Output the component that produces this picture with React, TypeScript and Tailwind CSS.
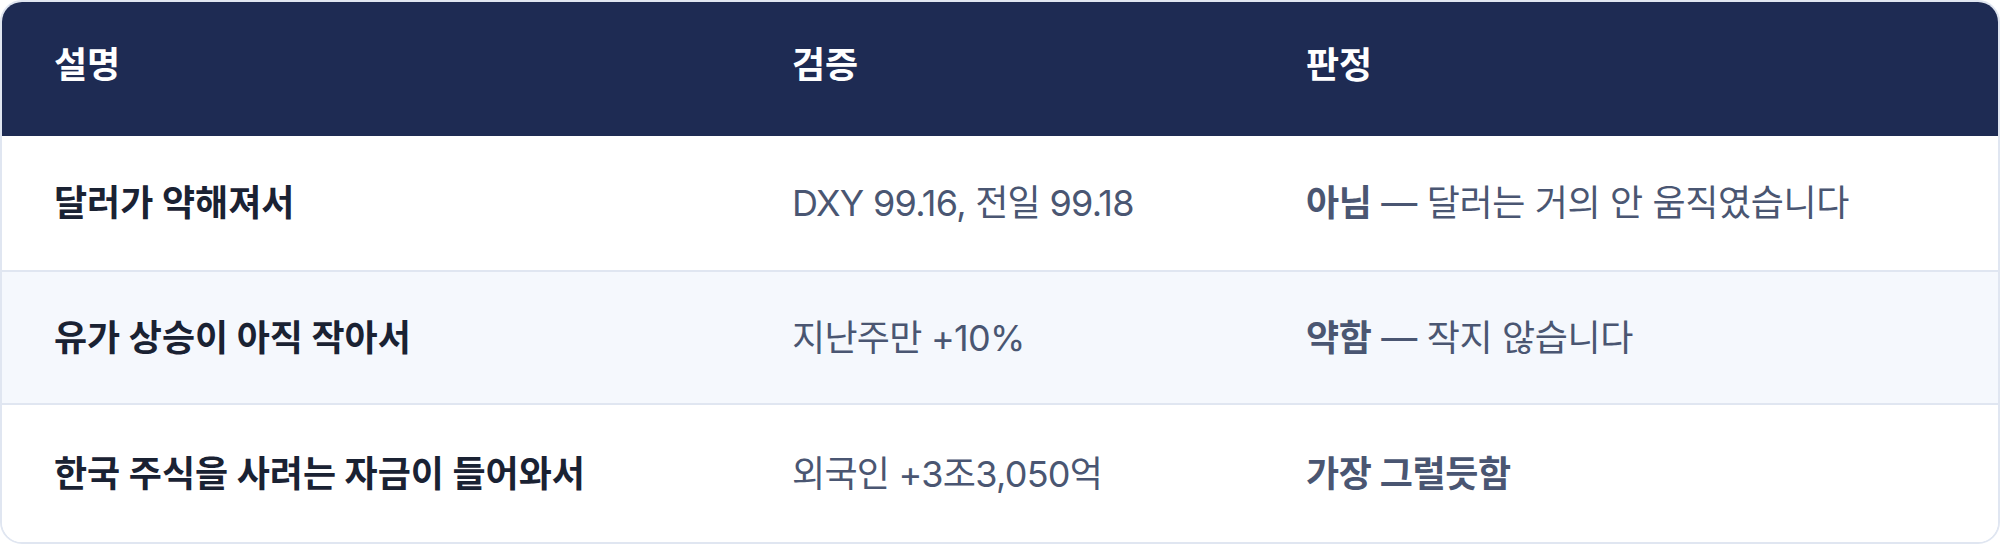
import React from "react";

const rows = [
  { a: "달러가 약해져서", b: "DXY 99.16, 전일 99.18", strong: "아님", rest: " — 달러는 거의 안 움직였습니다", bg: "bg-white", h: "h-[134px]" },
  { a: "유가 상승이 아직 작아서", b: "지난주만 +10%", strong: "약함", rest: " — 작지 않습니다", bg: "bg-[#f5f8fd]", h: "h-[133px]" },
  { a: "한국 주식을 사려는 자금이 들어와서", b: "외국인 +3조3,050억", strong: "가장 그럴듯함", rest: "", bg: "bg-white", h: "flex-1" },
];

export default function App() {
  return (
    <div
      className="w-[2000px] h-[544px] bg-white"
      style={{ fontFamily: 'Inter, "Noto Sans CJK KR", "Noto Sans", sans-serif' }}
    >
      <div className="w-full h-full border-2 border-[#e0e6f1] rounded-[22px] overflow-hidden flex flex-col">
        <div className="h-[134px] bg-[#1e2b53] grid grid-cols-[736px_514px_1fr] items-center text-white font-bold text-[36px] pb-[8px]">
          <div className="pl-[52px]">설명</div>
          <div className="pl-[54px]">검증</div>
          <div className="pl-[54px]">판정</div>
        </div>
        {rows.map((r, i) => (
          <div
            key={i}
            className={`${r.h} ${r.bg} ${i > 0 ? "border-t-2 border-[#e0e6f1]" : ""} grid grid-cols-[736px_514px_1fr] items-center text-[36px]`}
          >
            <div className="pl-[52px] font-bold text-[#1a2233]">{r.a}</div>
            <div className="pl-[54px] text-[#4a5672] tracking-[-0.02em]">{r.b}</div>
            <div className="pl-[54px] text-[#4a5672] tracking-[-0.01em]">
              <span className="font-bold">{r.strong}</span>
              {r.rest}
            </div>
          </div>
        ))}
      </div>
    </div>
  );
}
